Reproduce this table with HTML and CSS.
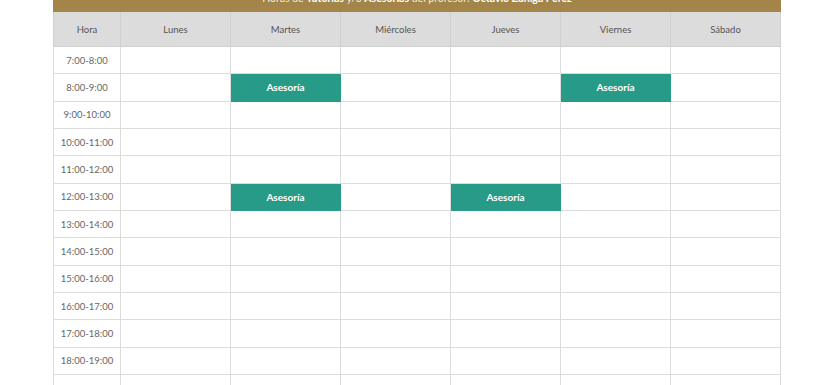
FILE: index.html
```html
<!DOCTYPE html>
<html lang="es">
<head>
<meta charset="utf-8">
<link rel="stylesheet" href="styles.css">
</head>
<body>
<div class="wrap">
  <div class="banner">Horas de <b>Tutorías</b> y/o <b>Asesorías</b> del profesor: <b>Octavio Zúñiga Pérez</b></div>
  <table class="sched">
    <colgroup><col class="c-hora"><col><col><col><col><col><col></colgroup>
    <thead>
      <tr><th>Hora</th><th>Lunes</th><th>Martes</th><th>Miércoles</th><th>Jueves</th><th>Viernes</th><th>Sábado</th></tr>
    </thead>
    <tbody>
      <tr><td>7:00-8:00</td><td></td><td></td><td></td><td></td><td></td><td></td></tr>
      <tr><td>8:00-9:00</td><td></td><td class="ase">Asesoría</td><td></td><td></td><td class="ase">Asesoría</td><td></td></tr>
      <tr><td>9:00-10:00</td><td></td><td></td><td></td><td></td><td></td><td></td></tr>
      <tr><td>10:00-11:00</td><td></td><td></td><td></td><td></td><td></td><td></td></tr>
      <tr><td>11:00-12:00</td><td></td><td></td><td></td><td></td><td></td><td></td></tr>
      <tr><td>12:00-13:00</td><td></td><td class="ase">Asesoría</td><td></td><td class="ase">Asesoría</td><td></td><td></td></tr>
      <tr><td>13:00-14:00</td><td></td><td></td><td></td><td></td><td></td><td></td></tr>
      <tr><td>14:00-15:00</td><td></td><td></td><td></td><td></td><td></td><td></td></tr>
      <tr><td>15:00-16:00</td><td></td><td></td><td></td><td></td><td></td><td></td></tr>
      <tr><td>16:00-17:00</td><td></td><td></td><td></td><td></td><td></td><td></td></tr>
      <tr><td>17:00-18:00</td><td></td><td></td><td></td><td></td><td></td><td></td></tr>
      <tr><td>18:00-19:00</td><td></td><td></td><td></td><td></td><td></td><td></td></tr>
      <tr><td>19:00-20:00</td><td></td><td></td><td></td><td></td><td></td><td></td></tr>
    </tbody>
  </table>
</div>
</body>
</html>
```
FILE: styles.css
```css
html, body {
  margin: 0;
  padding: 0;
  background: #fff;
  overflow: hidden;
}
body {
  font-family: Lato, "Open Sans", sans-serif;
  color: #555;
}
.wrap {
  width: 728px;
  margin: -22px 0 0 53px;
}
.banner {
  background: #a3854a;
  color: #f4ecdc;
  height: 34px;
  box-sizing: border-box;
  padding-top: 14px;
  text-align: center;
  font-size: 10.5px;
  line-height: 12px;
}
.banner b {
  color: #fff;
  font-weight: 700;
}
.sched {
  width: 728px;
  border-collapse: collapse;
  table-layout: fixed;
  font-size: 9.5px;
}
.c-hora {
  width: 67px;
}
.sched th, .sched td {
  border: 1px solid #dcdcdc;
  text-align: center;
  padding: 0;
}
.sched th {
  background: #dcdcdc;
  border-color: #d0d0d0;
  border-top: none;
  font-weight: 400;
  color: #555;
  height: 34px;
}
.sched td {
  height: 26.33px;
  color: #666;
}
.sched td.ase {
  background: #279a88;
  color: #fff;
  font-weight: 700;
  font-size: 10px;
  border-color: #279a88;
}
```
